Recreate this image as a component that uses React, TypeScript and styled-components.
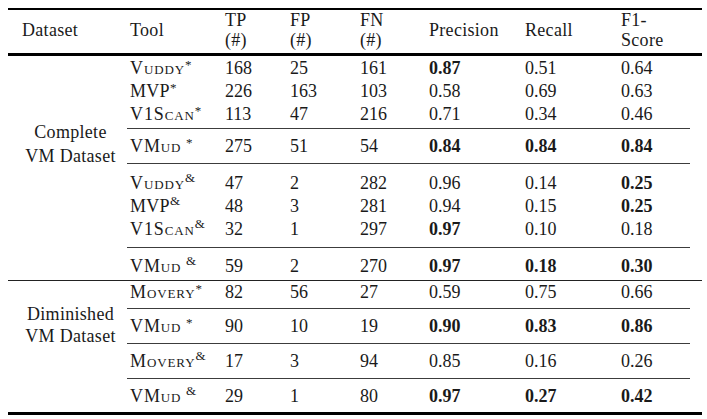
import React from 'react';
import styled, { createGlobalStyle, css } from 'styled-components';

const GlobalStyle = createGlobalStyle`
  body {
    margin: 0;
    background: #fff;
  }
`;

const Page = styled.div`
  padding: 8px 0 0 8px;
  font-family: 'Liberation Serif', 'DejaVu Serif', serif;
  font-size: 18px;
  color: #1a1a1a;
`;

const Table = styled.table`
  width: 694px;
  table-layout: fixed;
  border-collapse: separate;
  border-spacing: 0;
  border-top: 2px solid #000;
  border-bottom: 3px solid #000;
`;

const Col = styled.col<{ $w: number }>`
  width: ${(p) => p.$w}px;
`;

const Head = styled.th<{ $first?: boolean }>`
  font-weight: 400;
  text-align: left;
  vertical-align: middle;
  line-height: 20px;
  padding: 0 0 3px ${(p) => (p.$first ? 14 : 3)}px;
  border-bottom: 3px solid #000;
  white-space: nowrap;
  letter-spacing: 0.3px;
`;

const ruleBg = (short?: boolean, dark?: boolean) => css`
  background-image: linear-gradient(${dark ? '#222' : '#3c3c3c'}, ${dark ? '#222' : '#3c3c3c'});
  background-repeat: no-repeat;
  background-position: left bottom;
  background-size: ${short ? 'calc(100% - 12px)' : '100%'} 1px;
`;

const GroupCell = styled.td<{ $pt: number; $lh: number; $rule?: boolean }>`
  vertical-align: top;
  text-align: center;
  padding: ${(p) => p.$pt}px 0 0 6px;
  line-height: ${(p) => p.$lh}px;
  letter-spacing: 0.3px;
  ${(p) => p.$rule && ruleBg(false, true)}
`;

const Cell = styled.td<{ $pt: number; $pb: number; $rule?: 'mid' | 'full'; $short?: boolean; $bold?: boolean }>`
  padding: ${(p) => p.$pt}px 0 ${(p) => p.$pb}px 3px;
  line-height: 23px;
  white-space: nowrap;
  font-weight: ${(p) => (p.$bold ? 700 : 400)};
  ${(p) => p.$rule && ruleBg(p.$rule === 'mid' && p.$short, p.$rule === 'full')}
`;

const SmallCaps = styled.span`
  font-variant: small-caps;
  letter-spacing: 0.05em;
`;

const Sup = styled.sup<{ $lift: number }>`
  font-size: 13px;
  line-height: 0;
  vertical-align: ${(p) => p.$lift}px;
  letter-spacing: 0;
`;

type Row = {
  tool: string;
  sc?: boolean;
  mark: '*' | '&';
  gap?: boolean;
  tp: number;
  fp: number;
  fn: number;
  scores: [string, boolean][];
  pt: number;
  pb: number;
  rule?: 'mid' | 'full';
};

const complete: Row[] = [
  { tool: 'Vuddy', sc: true, mark: '*', tp: 168, fp: 25, fn: 161, scores: [['0.87', true], ['0.51', false], ['0.64', false]], pt: 1, pb: 0 },
  { tool: 'MVP', mark: '*', tp: 226, fp: 163, fn: 103, scores: [['0.58', false], ['0.69', false], ['0.63', false]], pt: 0, pb: 0 },
  { tool: 'V1Scan', sc: true, mark: '*', tp: 113, fp: 47, fn: 216, scores: [['0.71', false], ['0.34', false], ['0.46', false]], pt: 0, pb: 3, rule: 'mid' },
  { tool: 'VMud', sc: true, mark: '*', gap: true, tp: 275, fp: 51, fn: 54, scores: [['0.84', true], ['0.84', true], ['0.84', true]], pt: 6, pb: 6, rule: 'mid' },
  { tool: 'Vuddy', sc: true, mark: '&', tp: 47, fp: 2, fn: 282, scores: [['0.96', false], ['0.14', false], ['0.25', true]], pt: 8, pb: 0 },
  { tool: 'MVP', mark: '&', tp: 48, fp: 3, fn: 281, scores: [['0.94', false], ['0.15', false], ['0.25', true]], pt: 0, pb: 0 },
  { tool: 'V1Scan', sc: true, mark: '&', tp: 32, fp: 1, fn: 297, scores: [['0.97', true], ['0.10', false], ['0.18', false]], pt: 0, pb: 7, rule: 'mid' },
  { tool: 'VMud', sc: true, mark: '&', gap: true, tp: 59, fp: 2, fn: 270, scores: [['0.97', true], ['0.18', true], ['0.30', true]], pt: 7, pb: 3, rule: 'full' },
];

const diminished: Row[] = [
  { tool: 'Movery', sc: true, mark: '*', tp: 82, fp: 56, fn: 27, scores: [['0.59', false], ['0.75', false], ['0.66', false]], pt: 0, pb: 5, rule: 'mid' },
  { tool: 'VMud', sc: true, mark: '*', gap: true, tp: 90, fp: 10, fn: 19, scores: [['0.90', true], ['0.83', true], ['0.86', true]], pt: 6, pb: 6, rule: 'mid' },
  { tool: 'Movery', sc: true, mark: '&', tp: 17, fp: 3, fn: 94, scores: [['0.85', false], ['0.16', false], ['0.26', false]], pt: 6, pb: 6, rule: 'mid' },
  { tool: 'VMud', sc: true, mark: '&', gap: true, tp: 29, fp: 1, fn: 80, scores: [['0.97', true], ['0.27', true], ['0.42', true]], pt: 6, pb: 4 },
];

const ToolName = ({ row }: { row: Row }) => (
  <>
    {row.sc ? <SmallCaps>{row.tool}</SmallCaps> : <span style={{ letterSpacing: '0.3px' }}>{row.tool}</span>}
    {row.gap ? ' ' : ''}
    <Sup $lift={row.mark === '*' ? 5 : 7}>{row.mark}</Sup>
  </>
);

const Group = ({ label, rows, pt, lh, rule }: { label: [string, string]; rows: Row[]; pt: number; lh: number; rule?: boolean }) => (
  <>
    {rows.map((r, i) => {
      const props = { $pt: r.pt, $pb: r.pb, $rule: r.rule };
      return (
        <tr key={i}>
          {i === 0 && (
            <GroupCell rowSpan={rows.length} $pt={pt} $lh={lh} $rule={rule}>
              {label[0]}
              <br />
              {label[1]}
            </GroupCell>
          )}
          <Cell {...props}>
            <ToolName row={r} />
          </Cell>
          <Cell {...props}>{r.tp}</Cell>
          <Cell {...props}>{r.fp}</Cell>
          <Cell {...props}>{r.fn}</Cell>
          {r.scores.map(([v, b], j) => (
            <Cell key={j} {...props} $bold={b} $short={j === 2}>
              {v}
            </Cell>
          ))}
        </tr>
      );
    })}
  </>
);

export default function App() {
  return (
    <Page>
      <GlobalStyle />
      <Table>
        <colgroup>
          {[119, 95, 65, 70, 69, 96, 96, 84].map((w, i) => (
            <Col key={i} $w={w} />
          ))}
        </colgroup>
        <thead>
          <tr>
            <Head $first>Dataset</Head>
            <Head>Tool</Head>
            <Head>
              TP
              <br />
              (#)
            </Head>
            <Head>
              FP
              <br />
              (#)
            </Head>
            <Head>
              FN
              <br />
              (#)
            </Head>
            <Head>Precision</Head>
            <Head>Recall</Head>
            <Head>
              F1-
              <br />
              Score
            </Head>
          </tr>
        </thead>
        <tbody>
          <Group label={['Complete', 'VM Dataset']} rows={complete} pt={64} lh={24} rule />
          <Group label={['Diminished', 'VM Dataset']} rows={diminished} pt={22} lh={22} />
        </tbody>
      </Table>
    </Page>
  );
}
